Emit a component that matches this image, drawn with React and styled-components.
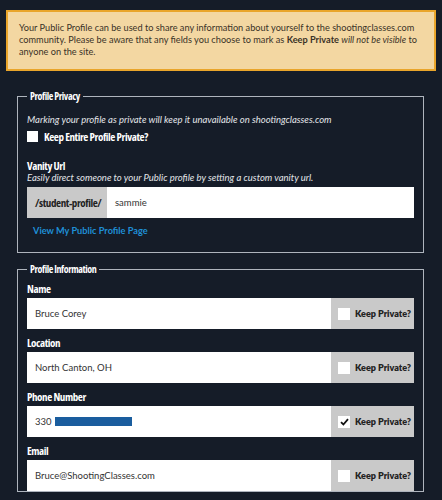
import React from 'react'
import styled, { createGlobalStyle } from 'styled-components'

const condensed = `"Open Sans", "DejaVu Sans Condensed", sans-serif`

const GlobalStyle = createGlobalStyle`
    body {
        margin: 0;
        background: #151c28;
        font-family: Lato, "Open Sans", sans-serif;
    }
`

const Page = styled.div`
    width: 442px;
    padding: 10px 6px 0;
    box-sizing: border-box;
`

const Notice = styled.div`
    background: #f3d7a2;
    border: 2px solid #e9a52b;
    padding: 10px 8px 11px 11px;
    font-size: 9.2px;
    line-height: 12px;
    color: #3a3227;
`

const Section = styled.fieldset`
    margin: ${p => p.$top}px 12px 0 11px;
    padding: 0 9px 0;
    border: 1px solid #aeb4bd;
    min-width: 0;
`

const Legend = styled.legend`
    padding: 0 3px;
    color: #fff;
    font-family: ${condensed};
    font-stretch: 75%;
    font-weight: 700;
    font-size: 10px;
    letter-spacing: -0.4px;
    line-height: 14px;
`

const Hint = styled.p`
    margin: ${p => p.$top || 0}px 0 0;
    color: #e4e6ea;
    font-style: italic;
    font-size: 9.5px;
    line-height: 12px;
`

const CheckRow = styled.label`
    display: flex;
    align-items: center;
    gap: 6px;
    margin-top: 3px;
    color: #fff;
    font-family: ${condensed};
    font-stretch: 75%;
    font-weight: 700;
    font-size: 11px;
    letter-spacing: -0.4px;
`

const Box = styled.span`
    width: ${p => p.$size}px;
    height: ${p => p.$size}px;
    background: #fff;
    display: flex;
    align-items: center;
    justify-content: center;
    flex-shrink: 0;
`

const Label = styled.div`
    margin-top: ${p => p.$top || 0}px;
    color: #fff;
    font-family: ${condensed};
    font-stretch: 75%;
    font-weight: 700;
    font-size: 11px;
    letter-spacing: -0.4px;
    line-height: 13px;
`

const Group = styled.div`
    display: flex;
    height: 31px;
    margin-top: 3px;
    background: #fff;
`

const Addon = styled.div`
    background: #c9c9c9;
    display: flex;
    align-items: center;
    gap: 5px;
    padding: 0 6px 0 ${p => p.$condensed ? 8 : 7}px;
    width: ${p => p.$w}px;
    box-sizing: border-box;
    color: #222;
    white-space: nowrap;
    font-family: ${p => p.$condensed ? condensed : 'Lato, sans-serif'};
    font-stretch: ${p => p.$condensed ? '75%' : 'normal'};
    font-weight: ${p => p.$condensed ? 700 : 800};
    font-size: ${p => p.$condensed ? '11px' : '9px'};
    letter-spacing: ${p => p.$condensed ? '-0.4px' : '0'};
    flex-shrink: 0;
`

const Value = styled.div`
    flex: 1;
    display: flex;
    align-items: center;
    gap: 3px;
    padding: 0 8px;
    color: #333;
    font-size: 9.5px;
`

const Redacted = styled.span`
    width: 77px;
    height: 9px;
    background: #1a5d9e;
`

const Link = styled.a`
    margin: 7px 0 16px;
    padding-left: 6px;
    color: #1f8fd6;
    font-weight: 700;
    font-size: 9.2px;
    text-decoration: none;
`

const Stack = styled.div`
    display: flex;
    flex-direction: column;
`

const FieldList = styled.div`
    display: flex;
    flex-direction: column;
    gap: 7px;
    margin-top: 6px;
`

const Check = ({ checked, size = 11 }) => (
    <Box $size={size}>
        {checked && (
            <svg width="9" height="8" viewBox="0 0 9 8">
                <path d="M1 4.2 L3.4 6.5 L8 1.2" fill="none" stroke="#111" strokeWidth="1.8" />
            </svg>
        )}
    </Box>
)

const Field = ({ label, children, checked }) => (
    <Stack>
        <Label>{label}</Label>
        <Group>
            <Value>{children}</Value>
            <Addon $w={83}><Check checked={checked} size={12} />Keep Private?</Addon>
        </Group>
    </Stack>
)

const App = () => {
  return (
    <Page>
        <GlobalStyle />
        <Notice>
            Your Public Profile can be used to share any information about yourself to the shootingclasses.com community. Please be aware that any fields you choose to mark as <b>Keep Private</b> <i>will not be visible</i> to anyone on the site.
        </Notice>
        <Section $top={18}>
            <Legend>Profile Privacy</Legend>
            <Stack>
                <Hint $top={11}>Marking your profile as private will keep it unavailable on shootingclasses.com</Hint>
                <CheckRow><Check />Keep Entire Profile Private?</CheckRow>
                <Label $top={15}>Vanity Url</Label>
                <Hint>Easily direct someone to your Public profile by setting a custom vanity url.</Hint>
                <Group>
                    <Addon $w={80} $condensed>/student-profile/</Addon>
                    <Value>sammie</Value>
                </Group>
                <Link>View My Public Profile Page</Link>
            </Stack>
        </Section>
        <Section $top={9}>
            <Legend>Profile Information</Legend>
            <FieldList>
                <Field label="Name">Bruce Corey</Field>
                <Field label="Location">North Canton, OH</Field>
                <Field label="Phone Number" checked>330 <Redacted /></Field>
                <Field label="Email">Bruce@ShootingClasses.com</Field>
            </FieldList>
        </Section>
    </Page>
  )
}

export default App
